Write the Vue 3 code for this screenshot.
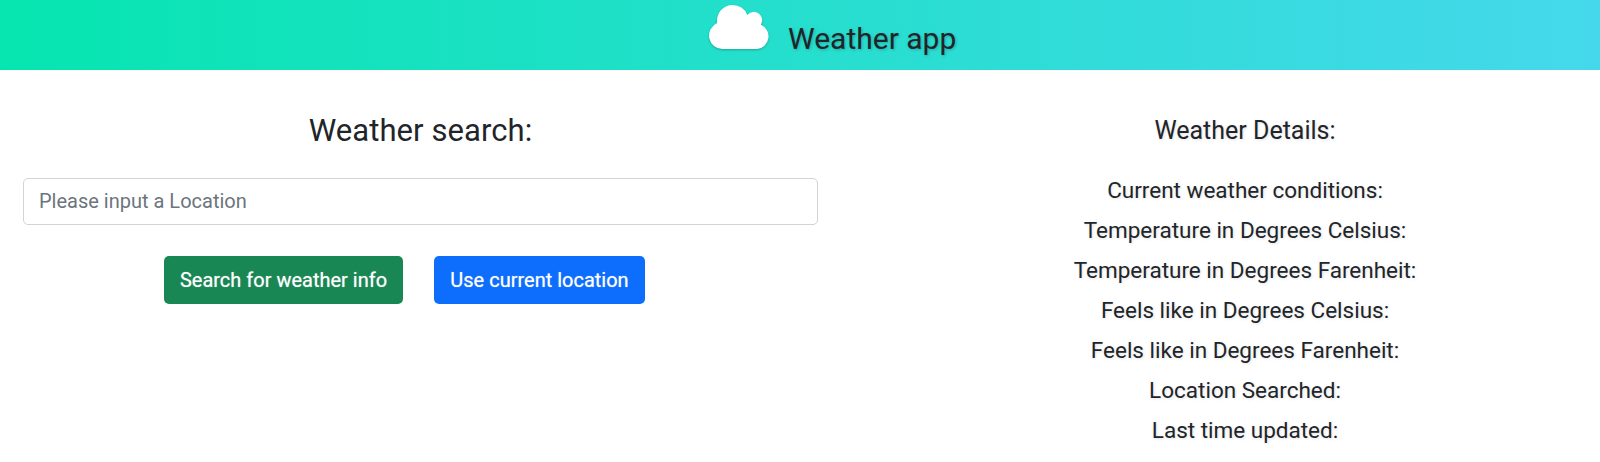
<script setup>
const details = [
  'Current weather conditions:',
  'Temperature in Degrees Celsius:',
  'Temperature in Degrees Farenheit:',
  'Feels like in Degrees Celsius:',
  'Feels like in Degrees Farenheit:',
  'Location Searched:',
  'Last time updated:',
]
</script>

<template>
  <div class="page">
    <header class="bar">
      <svg class="cloud" viewBox="0 0 61 45" width="61" height="45" aria-hidden="true">
        <path d="M13.500 44 A13.500 13.500 0 0 1 8.200 18.100 A15.500 15.500 0 0 1 23.500 0 A15.500 15.500 0 0 1 38.300 9.900 A8.400 8.400 0 0 1 51.900 19.700 A12.700 12.700 0 0 1 48 44 Z" />
      </svg>
      <h1>Weather app</h1>
    </header>
    <main class="columns">
      <section class="search">
        <h2>Weather search:</h2>
        <input type="text" placeholder="Please input a Location" />
        <div class="buttons">
          <button class="green" type="button">Search for weather info</button>
          <button class="blue" type="button">Use current location</button>
        </div>
      </section>
      <section class="details">
        <h3>Weather Details:</h3>
        <p v-for="item in details" :key="item">{{ item }}</p>
      </section>
    </main>
  </div>
</template>

<style>
body {
  margin: 0;
  background: #fff;
}
</style>

<style scoped>
.page {
  height: 462px;
  overflow: hidden;
  background: #fff;
  color: #212529;
  font-family: Roboto, sans-serif;
}
.bar {
  box-sizing: border-box;
  display: flex;
  align-items: flex-start;
  height: 70px;
  padding: 5px 0 0 709px;
  gap: 18px;
  background: linear-gradient(90deg, #06e5b0, #45d8ec);
}
.cloud {
  flex: none;
  overflow: visible;
  fill: #fff;
  filter: drop-shadow(0 1px 1px rgba(0, 0, 0, 0.25));
}
h1,
h2,
h3,
p {
  margin: 0;
  font-weight: 400;
  white-space: nowrap;
}
h1 {
  margin-top: 16px;
  font-size: 30px;
  line-height: 36px;
  text-shadow: 1px 1px 3px rgba(0, 0, 0, 0.22);
}
.columns {
  display: grid;
  grid-template-columns: 795px 810px;
  column-gap: 22px;
  padding-left: 23px;
  text-align: center;
}
.search,
.details {
  padding-top: 43px;
}
h2 {
  font-size: 31px;
  line-height: 36px;
  letter-spacing: 0.08px;
}
input {
  display: block;
  box-sizing: border-box;
  width: 795px;
  height: 47px;
  margin-top: 29px;
  padding: 0 15px 1px;
  border: 1px solid #ced4da;
  border-radius: 5px;
  outline: none;
  background: #fff;
  font: 400 20px/30px Roboto, sans-serif;
}
input::placeholder {
  color: #6c757d;
  opacity: 1;
}
.buttons {
  display: flex;
  gap: 31px;
  margin: 31px 0 0 141px;
}
button {
  box-sizing: border-box;
  width: 239px;
  height: 48px;
  padding: 0;
  border: 0;
  border-radius: 5px;
  color: #fff;
  font: 400 20px/30px Roboto, sans-serif;
  text-shadow: 0 0 1px rgba(255, 255, 255, 0.6);
  white-space: nowrap;
}
.green {
  background: #198754;
}
.blue {
  width: 211px;
  background: #0d6efd;
}
h3 {
  margin-bottom: 21px;
  font-size: 25px;
  line-height: 36px;
}
p {
  font-size: 22.5px;
  line-height: 40px;
}
h3,
p {
  text-shadow: 1px 1px 3px rgba(0, 0, 0, 0.12);
}
</style>
